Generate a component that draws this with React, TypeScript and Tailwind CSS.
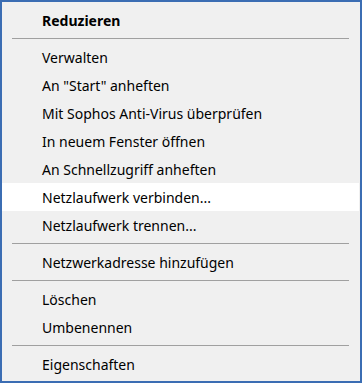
import React from "react";

type Item = { label: string; bold?: boolean; hover?: boolean } | "sep";

const items: Item[] = [
  { label: "Reduzieren", bold: true },
  "sep",
  { label: "Verwalten" },
  { label: 'An "Start" anheften' },
  { label: "Mit Sophos Anti-Virus überprüfen" },
  { label: "In neuem Fenster öffnen" },
  { label: "An Schnellzugriff anheften" },
  { label: "Netzlaufwerk verbinden...", hover: true },
  { label: "Netzlaufwerk trennen..." },
  "sep",
  { label: "Netzwerkadresse hinzufügen" },
  "sep",
  { label: "Löschen" },
  { label: "Umbenennen" },
  "sep",
  { label: "Eigenschaften" },
];

export default function App() {
  return (
    <div
      className="w-[362px] h-[383px] border-2 border-[#3b6db3] bg-[#f0f0f0] pt-[4px] flex flex-col"
      style={{ fontFamily: '"Noto Sans", "Open Sans", sans-serif' }}
    >
      {items.map((it, i) =>
        it === "sep" ? (
          <div key={i} className="pt-[4px] pb-[4px] pl-[10px] pr-[11px]">
            <div className="h-px bg-[#a0a0a0]" />
          </div>
        ) : (
          <div
            key={i}
            className={`h-[28px] flex items-center pl-[40px] mr-[1px] text-[14px] text-[#000000] ${
              it.hover ? "bg-white" : ""
            } ${it.bold ? "font-bold" : ""}`}
          >
            {it.label}
          </div>
        )
      )}
    </div>
  );
}
